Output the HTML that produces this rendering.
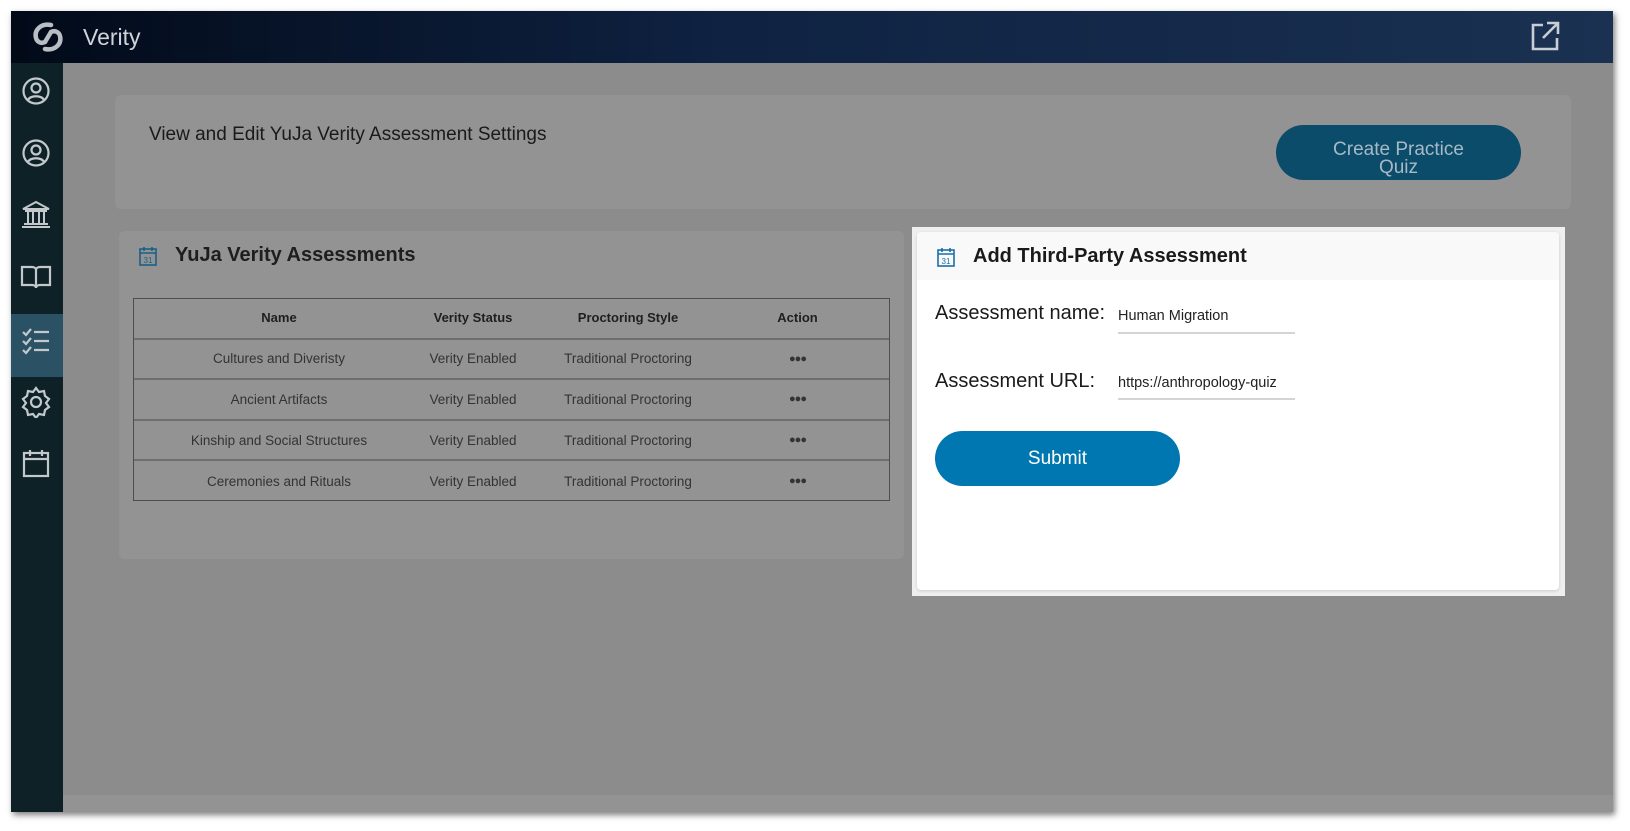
<!DOCTYPE html>
<html><head><meta charset="utf-8"><style>
*{margin:0;padding:0;box-sizing:border-box}
body{width:1630px;height:831px;background:#fff;position:relative;overflow:hidden;font-family:"Liberation Sans",sans-serif}
.frame{position:absolute;left:11px;top:11px;width:1602px;height:801px;background:#8c8c8c;box-shadow:2px 3px 6px rgba(0,0,0,.5)}
.hdr{position:absolute;left:0;top:0;width:1602px;height:52px;background:linear-gradient(90deg,#020a18 0%,#0f2242 45%,#1a3152 100%)}
.side{position:absolute;left:0;top:52px;width:52px;height:749px;background:#0d2127}
.act{position:absolute;left:0;top:251px;width:52px;height:63px;background:#2a5264}
.bottom{position:absolute;left:52px;top:784px;width:1550px;height:17px;background:#939393}
.card{position:absolute;background:#939393;border-radius:6px}
.abs{position:absolute}
table{border-collapse:collapse;table-layout:fixed;position:absolute;left:133px;top:298px;width:757px;font-size:13.5px;color:#333}
td,th{height:40.6px;text-align:center;border-top:2px solid #6e6e6e;white-space:nowrap}
th{font-weight:bold;font-size:13px;color:#1f1f1f;border-top:none}
.tb{position:absolute;left:133px;top:298px;width:757px;height:203px;border:1.5px solid #4e4e4e}
.dots{font-size:11px;letter-spacing:-1px}
</style></head><body>
<div class="frame">
 <div class="hdr">
  <svg class="abs" style="left:20px;top:10px" width="34" height="32" viewBox="0 0 34 32" fill="none" stroke="#b9bec5" stroke-width="4.5" stroke-linecap="round"><path d="M20 4C10 2 3 9 5 17c1 4 5 6 9 4"/><path d="M14 28c10 2 17-5 15-13c-1-4-5-6-9-4"/><path d="M14 21L20 11"/></svg>
  <div class="abs" style="left:72px;top:13px;color:#cfd4da;font-size:23px">Verity</div>
  <svg class="abs" style="left:1518px;top:9px" width="32" height="32" viewBox="0 0 32 32" fill="none" stroke="#c8ced6" stroke-width="2.6"><path d="M14 5H4v24h24V18"/><path d="M18 3h11v11M29 3L14 18"/></svg>
 </div>
 <div class="side">
  <div class="act"></div>
  <svg class="abs" style="left:10px;top:13px" width="30" height="30" viewBox="0 0 30 30" fill="none" stroke="#c3c8cc" stroke-width="2.2"><circle cx="15" cy="15" r="12.5"/><circle cx="15" cy="12" r="4.5"/><path d="M7 24c2-5 14-5 16 0"/></svg>
  <svg class="abs" style="left:10px;top:75px" width="30" height="30" viewBox="0 0 30 30" fill="none" stroke="#c3c8cc" stroke-width="2.2"><circle cx="15" cy="15" r="12.5"/><circle cx="15" cy="12" r="4.5"/><path d="M7 24c2-5 14-5 16 0"/></svg>
  <svg class="abs" style="left:9px;top:136px" width="32" height="30" viewBox="0 0 32 30" fill="none" stroke="#c3c8cc" stroke-width="2"><path d="M3 10L16 3l13 7zM5 12h22M8 13v11M13 13v11M19 13v11M24 13v11M4 25h24M2 28h28"/></svg>
  <svg class="abs" style="left:9px;top:200px" width="32" height="28" viewBox="0 0 32 28" fill="none" stroke="#c3c8cc" stroke-width="2.2"><path d="M2 4h10c2 0 4 1 4 3v18c0-2-2-3-4-3H2zM30 4H20c-2 0-4 1-4 3v18c0-2 2-3 4-3h10z"/></svg>
  <svg class="abs" style="left:10px;top:264px" width="30" height="28" viewBox="0 0 30 28" fill="none" stroke="#c3c8cc" stroke-width="2.2"><path d="M2 5l3 3 5-6M2 14l3 3 5-6M2 23l3 3 5-6M13 5h15M13 14h15M13 23h15"/></svg>
  <svg class="abs" style="left:9px;top:323px" width="32" height="32" viewBox="0 0 32 32" fill="none" stroke="#c3c8cc" stroke-width="2.2"><circle cx="16" cy="16" r="5"/><path d="M16 2l3 4 5-1 1 5 4 3-3 4 3 4-4 3-1 5-5-1-3 4-3-4-5 1-1-5-4-3 3-4-3-4 4-3 1-5 5 1z"/></svg>
  <svg class="abs" style="left:10px;top:385px" width="30" height="30" viewBox="0 0 30 30" fill="none" stroke="#c3c8cc" stroke-width="2.2"><rect x="3" y="5" width="24" height="23"/><path d="M3 11h24M9 2v6M21 2v6"/></svg>
 </div>
 <div class="bottom"></div>
</div>
<div class="card" style="left:115px;top:95px;width:1456px;height:114px"></div>
<div class="abs" style="left:149px;top:124px;font-size:19px;color:#1a1a1a">View and Edit YuJa Verity Assessment Settings</div>
<div class="abs" style="left:1276px;top:125px;width:245px;height:55px;border-radius:28px;background:#0b4c6a;color:#a7b9c6;font-size:19px;text-align:center;line-height:18px;padding-top:16px">Create Practice<br>Quiz</div>
<div class="card" style="left:119px;top:231px;width:785px;height:328px"></div>
<svg class="abs" style="left:139px;top:246px" width="18" height="20" viewBox="0 0 18 20" fill="none" stroke="#1a5f88" stroke-width="1.6"><rect x="1" y="3" width="16" height="16"/><path d="M1 7h16M5 1v4M13 1v4"/><text x="9" y="17" font-size="8" fill="#1a5f88" stroke="none" text-anchor="middle" font-family="Liberation Sans">31</text></svg>
<div class="abs" style="left:175px;top:244px;font-size:20px;font-weight:bold;color:#1e1e1e">YuJa Verity Assessments</div>
<table>
<colgroup><col style="width:292px"><col style="width:96px"><col style="width:214px"><col></colgroup>
<tr><th>Name</th><th>Verity Status</th><th>Proctoring Style</th><th style="padding-right:30px">Action</th></tr>
<tr><td>Cultures and Diveristy</td><td>Verity Enabled</td><td>Traditional Proctoring</td><td class="dots" style="padding-right:30px">●●●</td></tr>
<tr><td>Ancient Artifacts</td><td>Verity Enabled</td><td>Traditional Proctoring</td><td class="dots" style="padding-right:30px">●●●</td></tr>
<tr><td>Kinship and Social Structures</td><td>Verity Enabled</td><td>Traditional Proctoring</td><td class="dots" style="padding-right:30px">●●●</td></tr>
<tr><td>Ceremonies and Rituals</td><td>Verity Enabled</td><td>Traditional Proctoring</td><td class="dots" style="padding-right:30px">●●●</td></tr>
</table>
<div class="tb"></div>
<div class="abs" style="left:912px;top:227px;width:653px;height:369px;background:#efefef"></div>
<div class="abs" style="left:917px;top:232px;width:642px;height:358px;background:#fff;border-radius:4px;box-shadow:0 1px 3px rgba(0,0,0,.15)"></div>
<div class="abs" style="left:917px;top:232px;width:642px;height:48px;background:#f9f9f9;border-radius:4px 4px 0 0"></div>
<svg class="abs" style="left:937px;top:247px" width="18" height="20" viewBox="0 0 18 20" fill="none" stroke="#1a6fa8" stroke-width="1.6"><rect x="1" y="3" width="16" height="16"/><path d="M1 7h16M5 1v4M13 1v4"/><text x="9" y="17" font-size="8" fill="#1a6fa8" stroke="none" text-anchor="middle" font-family="Liberation Sans">31</text></svg>
<div class="abs" style="left:973px;top:245px;font-size:20px;font-weight:bold;color:#1a1a1a">Add Third-Party Assessment</div>
<div class="abs" style="left:935px;top:302px;font-size:20px;color:#1a1a1a">Assessment name:</div>
<div class="abs" style="left:1118px;top:308px;width:177px;height:26px;border-bottom:2px solid #d5d5d5;font-size:14.5px;color:#222;overflow:hidden;white-space:nowrap">Human Migration</div>
<div class="abs" style="left:935px;top:370px;font-size:20px;color:#1a1a1a">Assessment URL:</div>
<div class="abs" style="left:1118px;top:375px;width:177px;height:25px;border-bottom:2px solid #d5d5d5;font-size:14.5px;color:#222;overflow:hidden;white-space:nowrap">https://anthropology-quiz</div>
<div class="abs" style="left:935px;top:431px;width:245px;height:55px;border-radius:28px;background:#0077b0;color:#fff;font-size:19px;text-align:center;line-height:55px">Submit</div>
</body></html>
